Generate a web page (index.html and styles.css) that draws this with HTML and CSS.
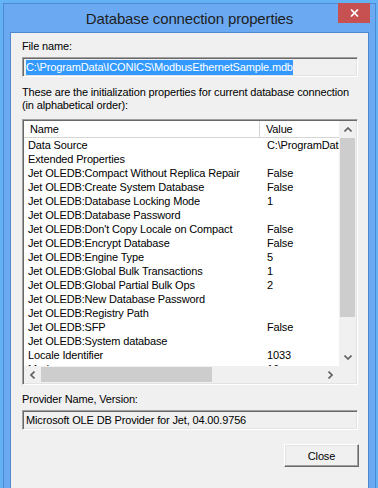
FILE: index.html
```html
<!DOCTYPE html>
<html lang="en">
<head>
  <meta charset="UTF-8" />
  <title>Database connection properties</title>
  <link rel="stylesheet" href="styles.css">
</head>
<body>

  <div class="window">
    <div class="titlebar">Database connection properties</div>
    <div class="close-x">
      <svg width="9" height="8" viewBox="0 0 9 8"><path d="M1 0.5 L8 7.5 M8 0.5 L1 7.5" stroke="#fff" stroke-width="1.7" fill="none"/></svg>
    </div>

    <div class="client">
      <div class="label">File name:</div>
      <div class="field"><span class="selected">C:\ProgramData\ICONICS\ModbusEthernetSample.mdb</span></div>

      <p class="info">These are the initialization properties for current database connection (in alphabetical order):</p>

      <div class="listview">
        <div class="list-area">
          <div class="list-header">
            <div class="col-name">Name</div>
            <div class="col-value">Value</div>
          </div>
          <div class="row"><div class="c1">Data Source</div><div class="c2">C:\ProgramData\ICONICS</div></div>
          <div class="row"><div class="c1">Extended Properties</div><div class="c2"></div></div>
          <div class="row"><div class="c1">Jet OLEDB:Compact Without Replica Repair</div><div class="c2">False</div></div>
          <div class="row"><div class="c1">Jet OLEDB:Create System Database</div><div class="c2">False</div></div>
          <div class="row"><div class="c1">Jet OLEDB:Database Locking Mode</div><div class="c2">1</div></div>
          <div class="row"><div class="c1">Jet OLEDB:Database Password</div><div class="c2"></div></div>
          <div class="row"><div class="c1">Jet OLEDB:Don't Copy Locale on Compact</div><div class="c2">False</div></div>
          <div class="row"><div class="c1">Jet OLEDB:Encrypt Database</div><div class="c2">False</div></div>
          <div class="row"><div class="c1">Jet OLEDB:Engine Type</div><div class="c2">5</div></div>
          <div class="row"><div class="c1">Jet OLEDB:Global Bulk Transactions</div><div class="c2">1</div></div>
          <div class="row"><div class="c1">Jet OLEDB:Global Partial Bulk Ops</div><div class="c2">2</div></div>
          <div class="row"><div class="c1">Jet OLEDB:New Database Password</div><div class="c2"></div></div>
          <div class="row"><div class="c1">Jet OLEDB:Registry Path</div><div class="c2"></div></div>
          <div class="row"><div class="c1">Jet OLEDB:SFP</div><div class="c2">False</div></div>
          <div class="row"><div class="c1">Jet OLEDB:System database</div><div class="c2"></div></div>
          <div class="row"><div class="c1">Locale Identifier</div><div class="c2">1033</div></div>
          <div class="row"><div class="c1">Mode</div><div class="c2">16</div></div>
        </div>

        <div class="vscroll">
          <div class="arrow"><svg width="8" height="5" viewBox="0 0 8 5"><path d="M0.5 4.5 L4 1 L7.5 4.5" stroke="#606060" stroke-width="1.6" fill="none"/></svg></div>
          <div class="vthumb"></div>
          <div class="vtrack"></div>
          <div class="arrow"><svg width="8" height="5" viewBox="0 0 8 5"><path d="M0.5 0.5 L4 4 L7.5 0.5" stroke="#606060" stroke-width="1.6" fill="none"/></svg></div>
        </div>

        <div class="hscroll">
          <div class="arrow"><svg width="5" height="8" viewBox="0 0 5 8"><path d="M4.5 0.5 L1 4 L4.5 7.5" stroke="#606060" stroke-width="1.6" fill="none"/></svg></div>
          <div class="hthumb"></div>
          <div class="htrack"></div>
          <div class="arrow"><svg width="5" height="8" viewBox="0 0 5 8"><path d="M0.5 0.5 L4 4 L0.5 7.5" stroke="#606060" stroke-width="1.6" fill="none"/></svg></div>
        </div>

        <div class="corner"></div>
      </div>

      <div class="label provider-label">Provider Name, Version:</div>
      <div class="field">Microsoft OLE DB Provider for Jet, 04.00.9756</div>

      <div class="buttons">
        <button class="btn">Close</button>
      </div>
    </div>
  </div>

</body>
</html>
```

FILE: styles.css
```css
body {
  margin: 0;
  background: #63b2f5;
  font-family: 'Liberation Sans', Arial, sans-serif;
  font-size: 11px;
  letter-spacing: -0.15px;
  color: #000;
}

.window {
  position: relative; /* for the close button */
  margin: 3px 0 0 3px;
  width: 373px;
  box-sizing: border-box;
  background: #6ba9f2;
  border: 1px solid #4c8ad6;
  padding: 0 6px 6px 6px;
}

.titlebar {
  height: 28px;
  line-height: 30px;
  text-align: center;
  font-size: 15px;
  color: #1e1e1e;
  letter-spacing: -0.15px;
}

.close-x {
  position: absolute;
  top: -1px;
  right: 5px;
  width: 32px;
  height: 20px;
  background: #c75050;
  display: flex;
  align-items: center;
  justify-content: center;
}

.client {
  background: #f0f0f0;
  border: 1px solid #4f86cc;
  padding: 7px 10px 10px 11px;
  height: 444px;
  box-sizing: content-box;
}

.label {
  line-height: 13px;
}

.field {
  margin-top: 4px;
  height: 20px;
  box-sizing: border-box;
  border: 1px solid;
  border-color: #a0a0a0 #fff #fff #a0a0a0;
  box-shadow: inset 1px 1px 0 #696969, inset -1px -1px 0 #e3e3e3;
  padding: 2px 3px 0 3px;
  line-height: 14px;
  white-space: nowrap;
  overflow: hidden;
}

.selected {
  background: #3399ff;
  color: #fff;
  display: inline-block;
  line-height: 15px;
}

.info {
  margin: 9px 0 7px 0;
  line-height: 13px;
}

/* list view with scrollbars */
.listview {
  height: 266px;
  box-sizing: border-box;
  border: 1px solid;
  border-color: #a0a0a0 #fff #fff #a0a0a0;
  box-shadow: inset 1px 1px 0 #696969, inset -1px -1px 0 #e3e3e3;
  padding: 1px;
  display: grid;
  grid-template-columns: 1fr 17px;
  grid-template-rows: 1fr 17px;
}

.list-area {
  background: #fff;
  overflow: hidden;
  white-space: nowrap;
}

.list-header {
  display: flex;
  height: 17px;
  box-sizing: border-box;
  line-height: 16px;
  border-bottom: 1px solid #d5d5d5;
}

.col-name {
  width: 236px;
  flex-shrink: 0;
  padding-left: 6px;
  box-sizing: border-box;
  border-right: 1px solid #d5d5d5;
}

.col-value {
  padding-left: 6px;
}

.row {
  display: flex;
  height: 14px;
  line-height: 14px;
}

.row .c1 {
  width: 237px;
  flex-shrink: 0;
  padding-left: 4px;
  box-sizing: border-box;
}

.row .c2 {
  padding-left: 6px;
}

.vscroll {
  background: #f0f0f0;
  display: flex;
  flex-direction: column;
}

.vscroll .arrow {
  height: 17px;
  display: flex;
  align-items: center;
  justify-content: center;
}

.vthumb {
  height: 179px;
  margin: 0 1px;
  background: #cdcdcd;
}

.vtrack {
  flex: 1;
}

.hscroll {
  background: #f0f0f0;
  display: flex;
}

.hscroll .arrow {
  width: 17px;
  display: flex;
  align-items: center;
  justify-content: center;
}

.hthumb {
  width: 171px;
  margin: 1px 0;
  background: #cdcdcd;
}

.htrack {
  flex: 1;
}

.corner {
  background: #f0f0f0;
}

.provider-label {
  margin-top: 8px;
}

.buttons {
  margin-top: 14px;
  display: flex;
  justify-content: flex-end;
}

.btn {
  width: 75px;
  height: 23px;
  margin-right: -1px;
  font-family: 'Liberation Sans', Arial, sans-serif;
  font-size: 11px;
  letter-spacing: -0.15px;
  color: #000;
  background: #f0f0f0;
  border: 1px solid;
  border-color: #fff #696969 #696969 #fff;
  box-shadow: inset -1px -1px 0 #a0a0a0, inset 1px 1px 0 #e3e3e3;
  padding: 0;
}
```
